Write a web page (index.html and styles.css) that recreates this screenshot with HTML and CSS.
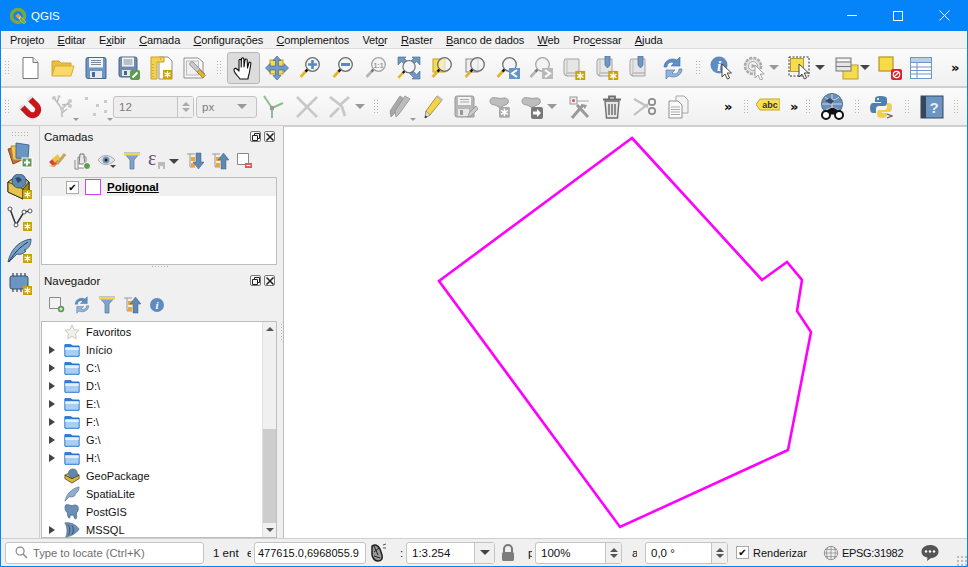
FILE: index.html
```html
<!DOCTYPE html>
<html lang="pt">
<head>
<meta charset="utf-8">
<title>QGIS</title>
<link rel="stylesheet" href="styles.css">
</head>
<body>
<svg class="sprite" width="0" height="0" aria-hidden="true">
<defs>
<g id="star"><rect width="9" height="9" fill="#c9a207"/><path d="M4.500 1.200v6.600M1.600 2.900l5.800 3.200M7.400 2.900L1.600 6.100" stroke="#fff" stroke-width="1.200"/></g>
<g id="stargrey"><rect width="9" height="9" rx="1" fill="#a9a9a9"/><path d="M4.500 1.200v6.600M1.600 2.900l5.800 3.200M7.400 2.900L1.600 6.100" stroke="#fff" stroke-width="1.200"/></g>
<g id="ptr"><path d="M0 0v13l3-3 2.400 5 2.200-1-2.400-5H9.500z" fill="#fff" stroke="#333" stroke-width=".9"/></g>
<g id="lens"><path d="M9 14l-6.500 7" stroke="#e2b52d" stroke-width="2.600"/><path d="M10 13l-2.500 2.600" stroke="#111" stroke-width="2.400"/><circle cx="14.500" cy="8.500" r="6.800" fill="#f2f4f5" stroke="#6e6e6e" stroke-width="1.300"/></g>
<g id="lensg"><path d="M9 14l-6.500 7" stroke="#b5b5b5" stroke-width="2.600"/><path d="M10 13l-2.500 2.600" stroke="#777" stroke-width="2.400"/><circle cx="14.500" cy="8.500" r="6.800" fill="#f4f4f4" stroke="#a5a5a5" stroke-width="1.300"/></g>
<g id="scroll"><path d="M3 3h14v17H5.500C3.500 20 2 19 2 17V5z" fill="#e6e6e6" stroke="#a3a3a3"/><path d="M5.500 20c-2 0-2-3 0-3H17" fill="none" stroke="#a3a3a3"/><path d="M5 4v13" stroke="#bdbdbd"/></g>
<g id="blob"><path d="M3 6c0-3 3-4 7-3s5 0 8 0 4 3 3 5-4 2-5 3-4 2-6 0-7 0-7-5z" fill="#bdbdbd" stroke="#9b9b9b"/></g>

<symbol id="new" viewBox="0 0 24 24"><path d="M5 1.500h10l5 5v16H5z" fill="#fff" stroke="#777"/><path d="M15 1.500v5h5" fill="#eee" stroke="#777"/></symbol>
<symbol id="open" viewBox="0 0 24 24"><path d="M1 20V5h7l2 2h10v4" fill="#e8bf3f" stroke="#d2a62b"/><path d="M1 20l3-10h19l-3 10z" fill="#f8d969" stroke="#d9ae30"/></symbol>
<symbol id="save" viewBox="0 0 24 24"><path d="M2 3.500a2 2 0 0 1 2-2h16a2 2 0 0 1 2 2v19H4a2 2 0 0 1-2-2z" fill="#6b95c3" stroke="#47698f"/><rect x="5" y="2" width="14" height="9.500" fill="#f4f4f4"/><path d="M7 4.500h10M7 6.500h10M7 8.500h10" stroke="#7d8a97"/><rect x="6" y="15" width="12" height="7" fill="#e6e9ec"/><rect x="8" y="16" width="3" height="5" fill="#47698f"/></symbol>
<symbol id="saveas" viewBox="0 0 24 24"><path d="M2 3a2 2 0 0 1 2-2h14a2 2 0 0 1 2 2v18H4a2 2 0 0 1-2-2z" fill="#6b8cb0" stroke="#4c6580"/><rect x="5" y="1.500" width="12" height="9" fill="#f4f4f4"/><path d="M6.500 4h9M6.500 6h9M6.500 8h9" stroke="#7d8a97"/><rect x="5" y="14" width="11" height="6" fill="#e6e9ec"/><rect x="7" y="15" width="3" height="4" fill="#4c6580"/><rect x="13" y="14" width="10" height="10" rx="2" fill="#5f9a54"/><path d="M15.500 21.500l5-5" stroke="#fff" stroke-width="2"/></symbol>
<symbol id="layout" viewBox="0 0 24 24"><path d="M9 1h9l4 4v18H9z" fill="#fff" stroke="#8d8d8d"/><path d="M1 1h13v5H7v17H1z" fill="#f3d34e" stroke="#c4a02a"/><path d="M3 8v13M10 3h3" stroke="#a98c28" stroke-dasharray="1 2"/><use href="#star" x="13" y="14"/></symbol>
<symbol id="report" viewBox="0 0 24 24"><path d="M1 2h14l5 4v16H1z" fill="#f8f8f8" stroke="#8f8f8f"/><rect x="3.500" y="5" width="12" height="14" fill="#eef1f4" stroke="#bbb"/><path d="M8 6c-2 1-2 3 0 4l9 9 2 2 3-3-2-2-9-9c-1-1.500-2-1.500-3-1z" fill="#c9c9c9" stroke="#777" stroke-width=".7"/><path d="M14 16l6 6 2.500-2.500-6-6z" fill="#e2b52d" stroke="#9c7d18" stroke-width=".7"/></symbol>
<symbol id="hand" viewBox="0 0 24 24"><path d="M8 23c-2-3-6-6-6-9 0-2 2-2 3-1l2 2V4.500c0-1.500 2.200-1.500 2.200 0V11l.3-8c0-1.500 2.400-1.500 2.400 0l.1 8 1-7c.2-1.500 2.300-1.200 2.200.3L15.500 12l1.300-5c.4-1.400 2.400-.9 2.100.5L17.500 16c-.5 3-1.500 4-1.500 7z" fill="#fff" stroke="#111" stroke-width="1.100" stroke-linejoin="round"/></symbol>
<symbol id="pan" viewBox="0 0 24 24"><rect x="5" y="4" width="13" height="14" fill="#f6dc52" stroke="#b89b2a"/><path d="M12 0l4 4.500h-2.500v5.500h5.500V7.500l4.500 4.500-4.500 4.500V14h-5.500v5.500H16L12 24l-4-4.500h2.500V14H5v2.500L.5 12 5 7.500V10h5.500V4.500H8z" fill="#6f9ac9" stroke="#47698f" stroke-width=".7"/></symbol>
<symbol id="zin" viewBox="0 0 24 24"><use href="#lens"/><path d="M14.500 4v9M10 8.500h9" stroke="#5b88b8" stroke-width="2.600"/></symbol>
<symbol id="zout" viewBox="0 0 24 24"><use href="#lens"/><path d="M10 8.500h9" stroke="#5b88b8" stroke-width="3"/></symbol>
<symbol id="z11" viewBox="0 0 24 24"><use href="#lensg"/><text x="14.500" y="11.500" class="svgt">1:1</text></symbol>
<symbol id="zfull" viewBox="0 0 24 24"><path d="M1 1h8L7.500 2.500l4 4-3 3-4-4L3 7 1 9zM23 1h-8l1.500 1.500-4 4 3 3 4-4L21 7l2 2zM23 23h-8l1.500-1.500-4-4 3-3 4 4L21 17l2-2z" fill="#6d97c4" stroke="#47698f" stroke-width=".6"/><g transform="translate(-1 3) scale(.9)"><use href="#lens"/></g></symbol>
<symbol id="zsel" viewBox="0 0 24 24"><rect x="3" y="3" width="12" height="13" fill="#f7dc4a" stroke="#bca02c"/><g><path d="M9 14l-6.500 7" stroke="#e2b52d" stroke-width="2.600"/><path d="M10 13l-2.500 2.600" stroke="#111" stroke-width="2.400"/><circle cx="14.500" cy="8.500" r="6.800" fill="#f2f4f5" fill-opacity=".65" stroke="#6e6e6e" stroke-width="1.300"/></g></symbol>
<symbol id="zlay" viewBox="0 0 24 24"><rect x="3" y="3" width="12" height="13" fill="#eee" stroke="#888"/><g><path d="M9 14l-6.500 7" stroke="#e2b52d" stroke-width="2.600"/><path d="M10 13l-2.500 2.600" stroke="#111" stroke-width="2.400"/><circle cx="14.500" cy="8.500" r="6.800" fill="#f2f4f5" fill-opacity=".65" stroke="#6e6e6e" stroke-width="1.300"/></g></symbol>
<symbol id="zlast" viewBox="0 0 24 24"><g transform="translate(-1 0)"><use href="#lens"/></g><rect x="13" y="12" width="11" height="11" fill="#6495c8"/><path d="M21 14l-5 3.500 5 3.500" fill="none" stroke="#fff" stroke-width="2"/></symbol>
<symbol id="znext" viewBox="0 0 24 24"><g transform="translate(-1 0)"><use href="#lensg"/></g><rect x="13" y="12" width="11" height="11" fill="#b9b9b9"/><path d="M16 14l5 3.500-5 3.500" fill="none" stroke="#fff" stroke-width="2"/></symbol>
<symbol id="bm1" viewBox="0 0 24 24"><use href="#scroll"/><use href="#star" x="13" y="14" transform="translate(-1 -.5) scale(1.100)"/></symbol>
<symbol id="bm2" viewBox="0 0 24 24"><use href="#scroll"/><path d="M10 0h5v9l-2.500 3L10 9z" fill="#6d97c4" stroke="#47698f" stroke-width=".7"/><use href="#star" x="13" y="14" transform="translate(-1 -.5) scale(1.100)"/></symbol>
<symbol id="bm3" viewBox="0 0 24 24"><use href="#scroll"/><path d="M10 0h5v9l-2.500 3L10 9z" fill="#6d97c4" stroke="#47698f" stroke-width=".7"/></symbol>
<symbol id="refresh" viewBox="0 0 24 24"><path d="M3 11C3 5 10 1 16 4l3-3v9h-9l3-3c-3-2-7 0-7 4z" fill="#5e8fc4" stroke="#3f6d9f" stroke-width=".6"/><path d="M21 13c0 6-7 10-13 7l-3 3v-9h9l-3 3c3 2 7 0 7-4z" fill="#8fb5dc" stroke="#3f6d9f" stroke-width=".6"/></symbol>
<symbol id="identify" viewBox="0 0 24 24"><circle cx="9" cy="9" r="8.500" fill="#5e8cc0"/><text x="9" y="14.500" class="svgi">i</text><use href="#ptr" x="12" y="8"/></symbol>
<symbol id="action" viewBox="0 0 24 24"><circle cx="10" cy="10" r="8" fill="#e3e3e3" stroke="#aaa" stroke-width="2.500" stroke-dasharray="3 1.200"/><circle cx="10" cy="10" r="4.500" fill="#f4f4f4" stroke="#aaa"/><path d="M8.500 7.500l4 2.500-4 2.500z" fill="#aaa"/><g transform="translate(12 9)"><path d="M0 0v13l3-3 2.400 5 2.200-1-2.400-5h4z" fill="#fff" stroke="#999" stroke-width=".9"/></g></symbol>
<symbol id="selrect" viewBox="0 0 24 24"><rect x="1" y="1" width="20" height="19" fill="none" stroke="#333" stroke-dasharray="2 1.500"/><rect x="2.500" y="2.500" width="13" height="13" fill="#f7dc4a" stroke="#b89b2a"/><use href="#ptr" x="11" y="8"/></symbol>
<symbol id="attrsel" viewBox="0 0 24 24"><rect x="8" y="9" width="15" height="14" fill="#f7dc4a" stroke="#b89b2a"/><rect x="1" y="2" width="15" height="13" fill="#e6e6e6" stroke="#777"/><path d="M1 6h15M1 10.500h15" stroke="#777"/><rect x="3" y="3.500" width="11" height="1.500" fill="#fff"/></symbol>
<symbol id="desel" viewBox="0 0 24 24"><rect x="1" y="1" width="14" height="14" fill="#f7dc4a" stroke="#b89b2a" stroke-width="1.300"/><rect x="13" y="13" width="11" height="11" rx="2" fill="#d8242a"/><circle cx="18.500" cy="18.500" r="3.200" fill="none" stroke="#fff" stroke-width="1.200"/><path d="M16 21l5-5" stroke="#fff" stroke-width="1.200"/></symbol>
<symbol id="table" viewBox="0 0 24 24"><rect x="1.500" y="1.500" width="21" height="21" fill="#fff" stroke="#6d97c4"/><rect x="1.500" y="1.500" width="21" height="5" fill="#b9cfe6" stroke="#6d97c4"/><path d="M1.500 11h21M1.500 14.500h21M1.500 18h21M8 6.500v16" stroke="#6d97c4"/></symbol>
<symbol id="magnet" viewBox="0 0 24 24"><path d="M4 12l7 7a5.700 5.700 0 0 0 8-8l-7-7" fill="none" stroke="#c8141a" stroke-width="6"/><path d="M2.500 10.500l2 2M10.500 2.500l2 2" stroke="#e4e4e4" stroke-width="6"/></symbol>
<symbol id="tree" viewBox="0 0 24 24"><g fill="none" stroke="#bcbcbc" stroke-width="1.500"><path d="M11 22V14M11 14L3 3M11 14l8-8M11 10l8-1M6 8l2-7M11 18l5-4"/></g><g fill="#c8c8c8"><circle cx="3" cy="3" r="2"/><circle cx="8" cy="1.500" r="1.500"/><circle cx="19" cy="6" r="2"/><circle cx="19" cy="11" r="2"/><circle cx="11" cy="14" r="2"/></g></symbol>
<symbol id="dots" viewBox="0 0 24 24"><g fill="#cbcbcb"><rect x="1" y="2" width="3" height="3"/><rect x="9" y="18" width="3" height="3"/><rect x="12" y="9" width="3" height="3"/><rect x="20" y="5" width="3" height="3"/><rect x="20" y="15" width="3" height="3"/></g></symbol>
<symbol id="ysplit" viewBox="0 0 24 24"><path d="M10 13L2 1M10 13v10" stroke="#8fbc8f" stroke-width="2"/><path d="M10 13l11-5" stroke="#8fbc8f" stroke-width="2"/><rect x="8" y="11" width="4" height="4" fill="#999"/></symbol>
<symbol id="xgrey" viewBox="0 0 24 24"><path d="M2 2l20 20M22 2L2 22" stroke="#c8c8c8" stroke-width="2.500"/></symbol>
<symbol id="xgrey2" viewBox="0 0 24 24"><path d="M3 22L12 13M12 11l10-9M3 2l9 7 3 3 3 9" fill="none" stroke="#c8c8c8" stroke-width="2.800"/></symbol>
<symbol id="pencils" viewBox="0 0 24 24"><path d="M3 22l-1-6L12 1l4 3L6 19z" fill="#a9a9a9" stroke="#8a8a8a" stroke-width=".7"/><path d="M8 22l-1-6L17 1l5 3L11 19z" fill="#bdbdbd" stroke="#8a8a8a" stroke-width=".7"/></symbol>
<symbol id="pencil" viewBox="0 0 24 24"><path d="M4 23l1-7L16 1l5 4L9 20z" fill="#f2d54b" stroke="#9c8a3a" stroke-width=".9"/><path d="M4 23l1-7 4 4z" fill="#ddd" stroke="#777" stroke-width=".6"/><path d="M4 23l.4-2.500 2 1.500z" fill="#222"/><path d="M15 2l6 4.500 1-2L17 .5z" fill="#bbb"/></symbol>
<symbol id="savegrey" viewBox="0 0 24 24"><path d="M1 3a2 2 0 0 1 2-2h15a2 2 0 0 1 2 2v19H3a2 2 0 0 1-2-2z" fill="#b8b8b8" stroke="#989898"/><rect x="4" y="2" width="13" height="8" fill="#f2f2f2"/><path d="M6 4.500h9M6 7h9" stroke="#aaa"/><rect x="4" y="14" width="11" height="7" fill="#e8e8e8"/><rect x="6" y="15" width="3" height="5" fill="#999"/><path d="M14 22l1-4 7-7 2 3-7 7z" fill="#c9c9c9" stroke="#888" stroke-width=".7"/></symbol>
<symbol id="blobstar" viewBox="0 0 24 24"><use href="#blob"/><use href="#stargrey" transform="translate(12 12) scale(1.200)"/></symbol>
<symbol id="blobarrow" viewBox="0 0 24 24"><use href="#blob"/><rect x="12" y="12" width="12" height="12" rx="2" fill="#777"/><path d="M14 16.500h4V14l4 4-4 4v-2.500h-4z" fill="#fff"/></symbol>
<symbol id="nodetool" viewBox="0 0 24 24"><path d="M7 6h15" stroke="#aaa"/><rect x="3" y="2" width="7" height="7" fill="#eee" stroke="#999"/><circle cx="6.500" cy="5.500" r="1.500" fill="#c55"/><path d="M5 23L16 10M10 10l11 12" stroke="#9a9a9a" stroke-width="3"/><path d="M14 9l6 1-2 4z" fill="#9a9a9a"/></symbol>
<symbol id="trash" viewBox="0 0 24 24"><path d="M5 6h14l-1.500 17h-11z" fill="#e6e6e6" stroke="#6f6f6f" stroke-width="1.400"/><path d="M9 9v11M12 9v11M15 9v11" stroke="#6f6f6f" stroke-width="1.500"/><path d="M3 4.500h18M9 4V1.500h6V4" fill="none" stroke="#6f6f6f" stroke-width="1.800"/></symbol>
<symbol id="cut" viewBox="0 0 24 24"><path d="M1 4l14 8M1 20L15 9" stroke="#c0c0c0" stroke-width="2.200"/><circle cx="19" cy="7" r="3.200" fill="none" stroke="#8b8b8b" stroke-width="1.700"/><circle cx="19" cy="16" r="3.200" fill="none" stroke="#8b8b8b" stroke-width="1.700"/></symbol>
<symbol id="copy" viewBox="0 0 24 24"><path d="M10 1h8l4 4v13H10z" fill="#f3f3f3" stroke="#a9a9a9"/><path d="M3 6h9l4 4v13H3z" fill="#fafafa" stroke="#8f8f8f"/><path d="M5 12h9M5 14.500h9M5 17h9M5 19.500h9" stroke="#a9a9a9"/></symbol>
<symbol id="abc" viewBox="0 0 24 24"><path d="M4 4h20v11H4L0 9.500z" fill="#f8df55" stroke="#c9a42c"/><text x="14" y="13" class="svgabc">abc</text></symbol>
<symbol id="webb" viewBox="0 0 28 28"><circle cx="13" cy="11" r="10.500" fill="#6d8fb6" stroke="#4b6b91"/><path d="M3 11h20M13 1v20M6 4c4 4 10 4 14 0M6 18c4-4 10-4 14 0" fill="none" stroke="#c8d8e9"/><path d="M6 8l5-3 4 3-3 3z" fill="#344c68"/><circle cx="7" cy="22" r="4" fill="#fff" stroke="#111" stroke-width="2"/><circle cx="20" cy="22" r="4" fill="#fff" stroke="#111" stroke-width="2"/><path d="M7 18l5-3h3l5 3-4 3h-5z" fill="#111"/></symbol>
<symbol id="python" viewBox="0 0 24 24"><path d="M12 1c-5 0-6 1-6 3v3h6v1H4c-2 0-3 2-3 5s1 5 3 5h3v-4c0-2 1-3 3-3h5c2 0 3-1 3-3V4c0-2-2-3-6-3z" fill="#4f80ae"/><circle cx="9" cy="4" r="1" fill="#fff"/><path d="M18 8v3c0 3-1 4-3 4H10c-1 0-2 1-2 2v3c0 2 2 3 5 3s5-1 5-3v-2h-5v-1h7c2 0 3-2 3-5s-1-4-3-4z" fill="#f3cf4e"/><path d="M18 19l5 2-5 2" fill="none" stroke="#555" stroke-width="1.200"/></symbol>
<symbol id="help" viewBox="0 0 24 24"><rect x="1" y="1" width="22" height="22" fill="#6b95c3" stroke="#36475a"/><rect x="1" y="1" width="5" height="22" fill="#36475a"/><text x="14" y="18" class="svgq">?</text></symbol>

<symbol id="addlayer" viewBox="0 0 26 26"><path d="M1 7l12-3 4 13-11 5z" fill="#c56a38" stroke="#8a4a28"/><path d="M4 4h14v14H6z" fill="#f3c64f" stroke="#b08d2a"/><path d="M9 1l13 2-1 14-12-1z" fill="#6b95c3" stroke="#47698f"/><rect x="15" y="16" width="10" height="9" fill="#5f9a54" stroke="#fff"/><path d="M20 17.500v6M17 20.500h6" stroke="#fff" stroke-width="2"/></symbol>
<symbol id="dbadd" viewBox="0 0 26 26"><path d="M1 8l4-3h14l3 3v11l-6 6L1 18z" fill="#e5bd3b" stroke="#222"/><path d="M1 8l15 7v10L1 18z" fill="#e9c44a" stroke="#222" stroke-width=".8"/><path d="M16 15l6-7v11l-6 6z" fill="#a3851f" stroke="#222" stroke-width=".8"/><circle cx="12" cy="7" r="7" fill="#5f87b3" stroke="#3d5d80"/><path d="M8 4l4-1 3 3-4 3z" fill="#2f4866"/><use href="#star" x="16" y="16"/></symbol>
<symbol id="vec" viewBox="0 0 26 26"><path d="M3 3l6 16 8-13 6-1" fill="none" stroke="#333" stroke-width="1.500"/><circle cx="3" cy="3" r="2" fill="#fff" stroke="#555"/><circle cx="9" cy="19" r="2" fill="#fff" stroke="#555"/><circle cx="17" cy="6" r="2" fill="#fff" stroke="#555"/><circle cx="23" cy="5" r="2" fill="#fff" stroke="#555"/><use href="#star" x="16" y="16"/></symbol>
<symbol id="feather" viewBox="0 0 26 26"><path d="M1 24C3 14 10 3 24 1c0 8-4 10-7 11l2 1c-3 3-6 4-9 3l-5 5z" fill="#7ea3c9" stroke="#3d5d80"/><path d="M2 24C7 15 13 9 21 4" fill="none" stroke="#1f3550"/><use href="#star" x="16" y="16"/></symbol>
<symbol id="chip" viewBox="0 0 26 26"><rect x="3" y="6" width="18" height="13" rx="2" fill="#6b95c3" stroke="#36506e"/><path d="M6 3v3M10 3v3M14 3v3M18 3v3M6 19v3M10 19v3M14 19v3" stroke="#36506e" stroke-width="1.300"/><use href="#star" x="16" y="16"/></symbol>

<symbol id="style" viewBox="0 0 18 18"><path d="M1 10l7-6 3 6-5 5z" fill="#d8403a"/><path d="M4 7l6-5 2 4-5 5z" fill="#f0c53e"/><path d="M9 12l8-10" stroke="#c9a562" stroke-width="3"/><path d="M1 14l5 1 2-3" fill="#e9a33d"/></symbol>
<symbol id="addgroup" viewBox="0 0 18 18"><path d="M5 5h8v11H5z" fill="#fff" stroke="#888"/><path d="M7 2h4v3l1 7H6z" fill="#e8e8e8" stroke="#777"/><path d="M2 8v9h4" fill="none" stroke="#888"/><circle cx="14" cy="14" r="3.500" fill="#5f9a54" stroke="#fff"/></symbol>
<symbol id="eye" viewBox="0 0 18 18"><path d="M0 8c4-6 12-6 17 0-5 6-13 6-17 0z" fill="#e3e3e3" stroke="#a9a9a9"/><circle cx="8" cy="8" r="3.500" fill="#6d97c4"/><circle cx="8" cy="8" r="1.500" fill="#222"/><path d="M12 13h6l-3 3z" fill="#444"/></symbol>
<symbol id="filter" viewBox="0 0 18 18"><path d="M1 1h16l-6 7v9H7V8z" fill="#7fa4c9" stroke="#54769a" stroke-width=".7"/><rect x="1" y="1" width="16" height="2.500" fill="#f4d547"/></symbol>
<symbol id="eps" viewBox="0 0 18 18"><text x="0" y="13" class="svge">ε</text><path d="M10 10h7v7h-2v-3h-3v3h-2z" fill="#bbb"/></symbol>
<symbol id="expand" viewBox="0 0 18 18"><path d="M1 2h8M4 2v13h5" fill="none" stroke="#999"/><rect x="5" y="5" width="4" height="4" fill="#f0a53a"/><rect x="5" y="11" width="4" height="4" fill="#f0a53a"/><path d="M10 1h5v9h3l-5.500 7L7 10h3z" fill="#5f88b5" stroke="#3d5d80" stroke-width=".5"/></symbol>
<symbol id="collapse" viewBox="0 0 18 18"><path d="M1 2h8M4 2v13h5" fill="none" stroke="#999"/><rect x="5" y="5" width="4" height="4" fill="#f0a53a"/><rect x="5" y="11" width="4" height="4" fill="#f0a53a"/><path d="M10 17h5V8h3L12.500 1 7 8h3z" fill="#5f88b5" stroke="#3d5d80" stroke-width=".5"/></symbol>
<symbol id="rmlayer" viewBox="0 0 18 18"><path d="M1.500 1.500h11v11h-11z" fill="#fff" stroke="#8a8a8a"/><rect x="9" y="11" width="7" height="5" fill="#e05555"/><path d="M10.500 13.500h4" stroke="#fff" stroke-width="1.300"/></symbol>
<symbol id="addres" viewBox="0 0 18 18"><path d="M1.500 1.500h11v11h-11z" fill="#f3f3f3" stroke="#8a8a8a"/><circle cx="13" cy="13" r="3.200" fill="#5f9a54"/><path d="M13 11.500v3M11.500 13h3" stroke="#fff"/></symbol>
<symbol id="infosm" viewBox="0 0 18 18"><circle cx="9" cy="9" r="7" fill="#5e8cc0"/><text x="9" y="13" class="svgis">i</text></symbol>
<symbol id="star5" viewBox="0 0 18 18"><path d="M9 1l2.400 5.300 5.600.7-4 4 1 5.600L9 14l-5 2.600 1-5.600-4-4 5.600-.7z" fill="#f0f0ea" stroke="#c5c5bd"/></symbol>
<symbol id="folder" viewBox="0 0 18 18"><path d="M1 3h7l1.500 1.500H17V16H1z" fill="#2f7fd8" stroke="#1767c7"/><rect x="1.500" y="6" width="15" height="9.500" fill="#a9cff3"/><rect x="1.500" y="6" width="15" height="3" fill="#e3f0fb"/></symbol>
<symbol id="gpkg" viewBox="0 0 18 18"><path d="M1 8l8-4 8 4-8 4z" fill="#e9c44a" stroke="#222" stroke-width=".7"/><path d="M1 8v4l8 5 8-5V8l-8 4z" fill="#dcb432" stroke="#222" stroke-width=".7"/><circle cx="10" cy="6" r="5" fill="#5f87b3" stroke="#3d5d80" stroke-width=".7"/></symbol>
<symbol id="spl" viewBox="0 0 18 18"><path d="M1 17C3 9 8 3 17 1c0 5-3 7-5 8l1 1c-2 2-4 3-7 2l-3 3z" fill="#8eaed0" stroke="#4b6b91" stroke-width=".7"/></symbol>
<symbol id="pg" viewBox="0 0 18 18"><path d="M2 1c-2 3 0 8 2 9 0 2 0 5 2 6 1-1 1-3 1-4 1 1 3 1 4 0 0 1 0 4 2 5 2-1 1-5 1-7 2-2 3-6 1-8-3-2-5 0-6 0S5 0 2 1z" fill="#6d8fb6" stroke="#3d5d80" stroke-width=".8"/></symbol>
<symbol id="mssql" viewBox="0 0 18 18"><path d="M1 1c5-1 12 1 16 7-3 5-9 8-15 9 2-5 2-11-1-16z" fill="#6d8fb6" stroke="#3d5d80" stroke-width=".7"/><path d="M5 3c2 4 2 8 0 12M9 4c2 3 2 7 0 10" fill="none" stroke="#2f4866"/></symbol>
<symbol id="mouse" viewBox="0 0 20 20"><path d="M4 3c3-2 6-1 8 3l2 6c1 4-1 6-4 6s-5-2-6-6z" fill="#999" stroke="#222" stroke-width="1.500"/><path d="M6 3l4 9M11 5l-5 4M6 13l6 2" stroke="#222"/><path d="M15 2l3-1M15 5l3 0M14 0l1-1" stroke="#555"/></symbol>
<symbol id="lock" viewBox="0 0 16 18"><path d="M4 8V5a4 4 0 0 1 8 0v3" fill="none" stroke="#777" stroke-width="2"/><rect x="2" y="8" width="12" height="9" rx="1.500" fill="#7d7d7d"/></symbol>
<symbol id="globe" viewBox="0 0 18 18"><circle cx="9" cy="9" r="7.500" fill="#eee" stroke="#888"/><path d="M1.500 9h15M9 1.500v15M3 5h12M3 13h12M5.500 2.500c-2 4-2 9 0 13M12.500 2.500c2 4 2 9 0 13" fill="none" stroke="#888" stroke-width=".8"/></symbol>
<symbol id="chat" viewBox="0 0 18 18"><path d="M9 1c5 0 8.500 2.500 8.500 6.500S14 14 10 14l-4 3 .5-3.500C3 13 .5 11 .5 7.500S4 1 9 1z" fill="#555"/><circle cx="5" cy="7.500" r="1.200" fill="#fff"/><circle cx="9" cy="7.500" r="1.200" fill="#fff"/><circle cx="13" cy="7.500" r="1.200" fill="#fff"/></symbol>
<symbol id="search" viewBox="0 0 14 14"><circle cx="5.500" cy="5.500" r="4.300" fill="none" stroke="#888" stroke-width="1.300"/><path d="M8.700 8.700l4.300 4.300" stroke="#888" stroke-width="1.500"/></symbol>
<symbol id="qlogo" viewBox="0 0 18 18"><circle cx="9" cy="9" r="6.500" fill="none" stroke="#7ea63a" stroke-width="3.500"/><path d="M9 9l7 7" stroke="#f1f1f1" stroke-width="3"/><path d="M11 11l5 5" stroke="#7ea63a" stroke-width="2.500"/><rect x="7" y="7" width="4" height="4" transform="rotate(45 9 9)" fill="#eb9b2c"/></symbol>
<symbol id="float" viewBox="0 0 8 8"><path d="M2.500.500h5v5h-5z" fill="none" stroke="#222"/><path d="M.5 2.500h5v5h-5z" fill="#f5f5f5" stroke="#222"/></symbol>
<symbol id="closex" viewBox="0 0 8 8"><path d="M.5.500l7 7M7.500.500l-7 7" stroke="#222" stroke-width="1.500"/></symbol>
</defs>
</svg>

<div class="window">
  <header class="titlebar">
    <svg class="qlogo"><use href="#qlogo"/></svg>
    <span class="apptitle">QGIS</span>
    <div class="wincontrols">
      <span class="wbtn"><span class="wmin"></span></span>
      <span class="wbtn"><span class="wmax"></span></span>
      <span class="wbtn"><svg class="wclose" viewBox="0 0 11 11"><path d="M.5.500l10 10M10.500.500l-10 10" stroke="#fff" stroke-width="1"/></svg></span>
    </div>
  </header>

  <nav class="menubar">
    <span>Pro<u>j</u>eto</span><span><u>E</u>ditar</span><span>E<u>x</u>ibir</span><span><u>C</u>amada</span><span><u>C</u>onfigurações</span><span><u>C</u>omplementos</span><span>Vet<u>o</u>r</span><span><u>R</u>aster</span><span><u>B</u>anco de dados</span><span><u>W</u>eb</span><span>Pro<u>c</u>essar</span><span><u>A</u>juda</span>
  </nav>

  <div class="toolbar tb1">
    <span class="grip"></span>
    <span class="t"><svg class="i"><use href="#new"/></svg></span>
    <span class="t"><svg class="i"><use href="#open"/></svg></span>
    <span class="t"><svg class="i"><use href="#save"/></svg></span>
    <span class="t"><svg class="i"><use href="#saveas"/></svg></span>
    <span class="t"><svg class="i"><use href="#layout"/></svg></span>
    <span class="t"><svg class="i"><use href="#report"/></svg></span>
    <span class="grip g16"></span>
    <span class="t on"><svg class="i"><use href="#hand"/></svg></span>
    <span class="t"><svg class="i"><use href="#pan"/></svg></span>
    <span class="t"><svg class="i"><use href="#zin"/></svg></span>
    <span class="t"><svg class="i"><use href="#zout"/></svg></span>
    <span class="t"><svg class="i"><use href="#z11"/></svg></span>
    <span class="t"><svg class="i"><use href="#zfull"/></svg></span>
    <span class="t"><svg class="i"><use href="#zsel"/></svg></span>
    <span class="t"><svg class="i"><use href="#zlay"/></svg></span>
    <span class="t"><svg class="i"><use href="#zlast"/></svg></span>
    <span class="t"><svg class="i"><use href="#znext"/></svg></span>
    <span class="t"><svg class="i"><use href="#bm1"/></svg></span>
    <span class="t"><svg class="i"><use href="#bm2"/></svg></span>
    <span class="t"><svg class="i"><use href="#bm3"/></svg></span>
    <span class="t"><svg class="i"><use href="#refresh"/></svg></span>
    <span class="grip g15"></span>
    <span class="t t35"><svg class="i"><use href="#identify"/></svg></span>
    <span class="t wa"><svg class="i"><use href="#action"/></svg><span class="arr grey a2"></span></span>
    <span class="t wa2"><svg class="i"><use href="#selrect"/></svg><span class="arr a3"></span></span>
    <span class="t wa3"><svg class="i"><use href="#attrsel"/></svg><span class="arr a1"></span></span>
    <span class="t"><svg class="i"><use href="#desel"/></svg></span>
    <span class="t t30"><svg class="i"><use href="#table"/></svg></span>
    <span class="more m17">»</span>
  </div>

  <div class="toolbar tb2">
    <span class="grip"></span>
    <span class="t"><svg class="i"><use href="#magnet"/></svg></span>
    <span class="t"><svg class="i"><use href="#tree"/></svg><span class="arr small grey"></span></span>
    <span class="t t34"><svg class="i"><use href="#dots"/></svg><span class="arr small grey"></span></span>
    <span class="spin disabled w81"><span class="val">12</span><span class="spbtn"><i class="up"></i><i class="dn"></i></span></span>
    <span class="combo disabled w61"><span class="val">px</span><span class="arr grey"></span></span>
    <span class="t"><svg class="i"><use href="#ysplit"/></svg></span>
    <span class="t"><svg class="i"><use href="#xgrey"/></svg></span>
    <span class="t t44"><svg class="i"><use href="#xgrey2"/></svg><span class="arr grey"></span></span>
    <span class="grip g8"></span>
    <span class="t"><svg class="i"><use href="#pencils"/></svg><span class="arr small grey"></span></span>
    <span class="t"><svg class="i"><use href="#pencil"/></svg></span>
    <span class="t"><svg class="i"><use href="#savegrey"/></svg></span>
    <span class="t"><svg class="i"><use href="#blobstar"/></svg></span>
    <span class="t t47"><svg class="i"><use href="#blobarrow"/></svg><span class="arr grey"></span></span>
    <span class="t"><svg class="i"><use href="#nodetool"/></svg></span>
    <span class="t"><svg class="i"><use href="#trash"/></svg></span>
    <span class="t"><svg class="i"><use href="#cut"/></svg></span>
    <span class="t"><svg class="i"><use href="#copy"/></svg></span>
    <span class="more m37">»</span>
    <span class="grip g8"></span>
    <span class="t t30"><svg class="i"><use href="#abc"/></svg></span>
    <span class="more m12">»</span>
    <span class="grip g17"></span>
    <span class="t t34"><svg class="i big"><use href="#webb"/></svg></span>
    <span class="grip g8"></span>
    <span class="t t34"><svg class="i"><use href="#python"/></svg></span>
    <span class="grip g17"></span>
    <span class="t t34"><svg class="i"><use href="#help"/></svg></span>
    <span class="grip g8"></span>
  </div>

  <main class="main">
    <aside class="sidetools">
      <span class="hgrip"></span>
      <svg class="si"><use href="#addlayer"/></svg>
      <svg class="si"><use href="#dbadd"/></svg>
      <svg class="si"><use href="#vec"/></svg>
      <svg class="si"><use href="#feather"/></svg>
      <svg class="si"><use href="#chip"/></svg>
    </aside>

    <section class="panels">
      <div class="panel p1">
        <div class="ptitle"><span>Camadas</span><span class="pbtns"><span class="pb"><svg class="px"><use href="#float"/></svg></span><span class="pb"><svg class="px"><use href="#closex"/></svg></span></span></div>
        <div class="ptools">
          <svg class="pi"><use href="#style"/></svg>
          <svg class="pi"><use href="#addgroup"/></svg>
          <svg class="pi"><use href="#eye"/></svg>
          <svg class="pi"><use href="#filter"/></svg>
          <svg class="pi"><use href="#eps"/></svg><span class="arr nomar"></span>
          <svg class="pi"><use href="#expand"/></svg>
          <svg class="pi"><use href="#collapse"/></svg>
          <svg class="pi"><use href="#rmlayer"/></svg>
        </div>
        <div class="tree layers">
          <div class="layer"><span class="check">✔</span><span class="swatch"></span><b>Poligonal</b></div>
        </div>
      </div>
      <div class="splitter"></div>
      <div class="panel p2">
        <div class="ptitle"><span>Navegador</span><span class="pbtns"><span class="pb"><svg class="px"><use href="#float"/></svg></span><span class="pb"><svg class="px"><use href="#closex"/></svg></span></span></div>
        <div class="ptools">
          <svg class="pi"><use href="#addres"/></svg>
          <svg class="pi"><use href="#refresh"/></svg>
          <svg class="pi"><use href="#filter"/></svg>
          <svg class="pi"><use href="#collapse"/></svg>
          <svg class="pi"><use href="#infosm"/></svg>
        </div>
        <div class="tree browser">
          <div class="rows">
            <div class="row"><i class="exp none"></i><svg class="ri"><use href="#star5"/></svg>Favoritos</div>
            <div class="row"><i class="exp"></i><svg class="ri"><use href="#folder"/></svg>Início</div>
            <div class="row"><i class="exp"></i><svg class="ri"><use href="#folder"/></svg>C:\</div>
            <div class="row"><i class="exp"></i><svg class="ri"><use href="#folder"/></svg>D:\</div>
            <div class="row"><i class="exp"></i><svg class="ri"><use href="#folder"/></svg>E:\</div>
            <div class="row"><i class="exp"></i><svg class="ri"><use href="#folder"/></svg>F:\</div>
            <div class="row"><i class="exp"></i><svg class="ri"><use href="#folder"/></svg>G:\</div>
            <div class="row"><i class="exp"></i><svg class="ri"><use href="#folder"/></svg>H:\</div>
            <div class="row"><i class="exp none"></i><svg class="ri"><use href="#gpkg"/></svg>GeoPackage</div>
            <div class="row"><i class="exp none"></i><svg class="ri"><use href="#spl"/></svg>SpatiaLite</div>
            <div class="row"><i class="exp none"></i><svg class="ri"><use href="#pg"/></svg>PostGIS</div>
            <div class="row"><i class="exp"></i><svg class="ri"><use href="#mssql"/></svg>MSSQL</div>
          </div>
          <div class="scrollbar">
            <span class="sbtn"><i class="up"></i></span>
            <span class="strack"><span class="sthumb"></span></span>
            <span class="sbtn"><i class="dn"></i></span>
          </div>
        </div>
      </div>
    </section>

    <div class="vsplit"></div>

    <div class="canvas">
      <svg class="map" viewBox="284 127 683 411" preserveAspectRatio="none">
        <polygon points="632,138 762,280 787,262 802,280 797,311 811,332 788,450 620,527 439,281" fill="none" stroke="#ff00ff" stroke-width="2.600"/>
      </svg>
    </div>
  </main>

  <footer class="status">
    <span class="locator"><svg class="sr"><use href="#search"/></svg><span class="ph">Type to locate (Ctrl+K)</span></span>
    <span class="lbl l1">1 ent</span>
    <span class="lbl clip c1">e</span>
    <span class="field coord">477615.0,6968055.9</span>
    <svg class="st mouse"><use href="#mouse"/></svg>
    <span class="lbl clip c2">:</span>
    <span class="combo w89"><span class="val">1:3.254</span><span class="dropbtn"><span class="arr"></span></span></span>
    <svg class="st lock"><use href="#lock"/></svg>
    <span class="lbl clip c3">p</span>
    <span class="spin w87"><span class="val">100%</span><span class="spbtn"><i class="up"></i><i class="dn"></i></span></span>
    <span class="lbl clip c4">a</span>
    <span class="spin w83"><span class="val">0,0 °</span><span class="spbtn"><i class="up"></i><i class="dn"></i></span></span>
    <span class="check small">✔</span>
    <span class="lbl rend">Renderizar</span>
    <svg class="st globe"><use href="#globe"/></svg>
    <span class="lbl epsg">EPSG:31982</span>
    <svg class="st chat"><use href="#chat"/></svg>
    <span class="sizegrip"></span>
  </footer>
</div>
</body>
</html>
```
FILE: styles.css
```css
* { box-sizing: border-box; }
html, body { margin: 0; padding: 0; }
body { width: 968px; height: 567px; overflow: hidden; font-family: "Liberation Sans", Arial, sans-serif; font-size: 11.5px; color: #111; }
.sprite { position: absolute; }
.svgt { font: bold 7px "Liberation Sans", sans-serif; fill: #999; text-anchor: middle; }
.svgi { font: italic bold 15px "Liberation Serif", serif; fill: #fff; text-anchor: middle; }
.svgis { font: italic bold 11px "Liberation Serif", serif; fill: #fff; text-anchor: middle; }
.svgabc { font: bold 9px "Liberation Sans", sans-serif; fill: #333; text-anchor: middle; }
.svgq { font: bold 15px "Liberation Sans", sans-serif; fill: #e6edf5; text-anchor: middle; }
.svge { font: 20px "Liberation Serif", serif; fill: #6b4a7a; }

.window { width: 968px; height: 567px; display: flex; flex-direction: column; border: 1px solid #0583f8; border-top: 0; background: #f0f0f0; }

.titlebar { height: 31px; flex: none; background: #0583f8; display: flex; align-items: center; padding-left: 8px; color: #fff; }
.qlogo { width: 18px; height: 18px; }
.apptitle { margin-left: 4px; font-size: 11.5px; }
.wincontrols { margin-left: auto; display: flex; }
.wbtn { width: 46px; height: 31px; display: flex; align-items: center; justify-content: center; }
.wmin { width: 10px; height: 1px; background: #fff; }
.wmax { width: 10px; height: 10px; border: 1px solid #fff; }
.wclose { width: 11px; height: 11px; }

.menubar { height: 18px; flex: none; display: flex; align-items: center; padding-left: 2.4px; background: #f1f1f1; border-bottom: 1px solid #dcdcdc; font-size: 11px; letter-spacing: -.1px; }
.menubar span { padding: 0 6.65px; white-space: nowrap; }

.toolbar { flex: none; display: flex; align-items: center; background: linear-gradient(#fbfbfb, #f0f0f0); border-bottom: 2px solid #cfcfcf; }
.tb1 { height: 39px; }
.tb2 { height: 38px; border-bottom: 1px solid #cfcfcf; }

.grip { height: 16px; flex: none; width: 14px; padding: 0 4px; background-image: radial-gradient(circle, #b5b5b5 .6px, transparent .9px); background-size: 3px 3px; background-origin: content-box; background-clip: content-box; }
.toolbar > .grip:first-child { width: 12px; padding: 0 3px; }
.grip.g16 { width: 16px; padding: 0 5px; }
.grip.g15 { width: 15px; padding: 0 3px 0 6px; }
.grip.g17 { width: 17px; padding: 0 5px 0 6px; }

.t { position: relative; width: 33px; height: 32px; flex: none; display: flex; align-items: center; justify-content: center; }
.t.on { background: #dcdcdc; border: 1px solid #b8b8b8; border-radius: 3px; }
.t.wa { width: 45px; justify-content: flex-start; padding-left: 4px; }
.t.wa2 { width: 47px; justify-content: flex-start; padding-left: 4px; }
.t.wa3 { width: 42px; justify-content: flex-start; padding-left: 4px; }
.t.t30 { width: 30px; }
.t.t34 { width: 34px; }
.t.t35 { width: 35px; }
.t.t44 { width: 46px; justify-content: flex-start; padding-left: 4px; }
.t.t47 { width: 47px; justify-content: flex-start; padding-left: 4px; }
.i { width: 24px; height: 24px; flex: none; }
.i.big { width: 28px; height: 28px; }

.arr { display: inline-block; width: 0; height: 0; flex: none; margin-left: 4px; border-left: 5px solid transparent; border-right: 5px solid transparent; border-top: 5px solid #444; }
.arr.grey { border-top-color: #999; }
.arr.a1 { margin-left: 1px; }
.arr.a2 { margin-left: 2px; }
.arr.a3 { margin-left: 3px; }
.arr.small { position: absolute; right: 0; bottom: 2px; margin: 0; border-left-width: 3px; border-right-width: 3px; border-top-width: 3px; }
.arr.nomar { margin: 0 0 0 -4px; }
.more { font-family: "DejaVu Sans", sans-serif; font-weight: bold; font-size: 13px; line-height: 1; width: 14px; flex: none; color: #000; }
.m17 { margin-left: 15px; }
.m37 { width: 15px; margin-left: 30px; }
.m12 { width: 9px; margin-left: 7px; }

.spin, .combo { display: flex; align-items: center; height: 22px; flex: none; background: #fff; border: 1px solid #c4c4c4; border-radius: 3px; }
.disabled { background: #eee; color: #7a7a7a; }
.val { padding-left: 5px; flex: 1; }
.spbtn { width: 16px; height: 100%; flex: none; display: flex; flex-direction: column; align-items: center; justify-content: center; gap: 2px; border-left: 1px solid #c4c4c4; background: #f0f0f0; }
.up, .dn { display: block; width: 0; height: 0; border-left: 4px solid transparent; border-right: 4px solid transparent; }
.up { border-bottom: 4px solid #555; }
.dn { border-top: 4px solid #555; }
.disabled .up { border-bottom-color: #aaa; }
.disabled .dn { border-top-color: #aaa; }
.combo .arr { margin: 0 9px 0 0; }
.w81 { width: 81px; }
.w61 { width: 61px; margin-left: 2px; }
.w89 { width: 89px; }
.w87 { width: 87px; }
.w83 { width: 83px; }
.combo .dropbtn { width: 20px; height: 100%; display: flex; align-items: center; justify-content: center; border-left: 1px solid #c4c4c4; background: #f0f0f0; }
.combo .dropbtn .arr { margin: 0; }

.main { flex: 1; min-height: 0; display: flex; }
.sidetools { width: 39px; flex: none; display: flex; flex-direction: column; align-items: center; gap: 6px; border-right: 1px solid #cfcfcf; padding-top: 5px; }
.hgrip { width: 18px; height: 5px; flex: none; background: radial-gradient(circle, #b5b5b5 .6px, transparent .9px) 0 0 / 3px 3px; }
.si { width: 26px; height: 26px; flex: none; }

.panels { width: 240px; flex: none; display: flex; flex-direction: column; }
.panel { display: flex; flex-direction: column; }
.p1 { height: 139px; }
.p2 { flex: 1; min-height: 0; }
.ptitle { height: 21px; flex: none; display: flex; align-items: center; padding: 0 2px 0 4px; }
.pbtns { margin-left: auto; display: flex; gap: 3px; margin-right: 3px; }
.pb { width: 11px; height: 11px; border: 1px solid #777; border-radius: 2px; display: flex; align-items: center; justify-content: center; background: #f5f5f5; }
.px { width: 8px; height: 8px; flex: none; }
.ptools { height: 28px; margin-bottom: 2px; flex: none; display: flex; align-items: center; gap: 7px; padding-left: 8px; }
.pi { width: 18px; height: 18px; flex: none; }
.tree { background: #fff; border: 1px solid #bdbdbd; margin: 0 3px 0 1px; }
.layers { height: 88px; }
.layer { height: 18px; background: #f0f0f0; display: flex; align-items: center; padding-left: 24px; }
.layer b { text-decoration: underline; margin-left: 6px; color: #000; }
.check { width: 13px; height: 13px; flex: none; background: #fff; border: 1px solid #aaa; font: bold 10px/11px "DejaVu Sans", sans-serif; text-align: center; color: #000; }
.swatch { width: 16px; height: 16px; margin-left: 6px; flex: none; background: #fff; border: 1px solid #cc44ee; }
.splitter { height: 5px; flex: none; display: flex; justify-content: center; }
.splitter::before { content: ""; width: 18px; height: 3px; background: radial-gradient(circle, #b5b5b5 .6px, transparent .9px) 0 0 / 3px 3px; }
.browser { flex: 1; min-height: 0; display: flex; }
.rows { flex: 1; padding-top: 1px; font-size: 11px; }
.row { height: 18px; display: flex; align-items: center; white-space: nowrap; }
.exp { width: 0; height: 0; margin: 0 9px 0 7px; flex: none; border-top: 4px solid transparent; border-bottom: 4px solid transparent; border-left: 6px solid #444; }
.exp.none { border-left-color: transparent; }
.ri { width: 16px; height: 16px; margin-right: 6px; flex: none; }
.scrollbar { width: 14px; flex: none; display: flex; flex-direction: column; background: #f0f0f0; border-left: 1px solid #e0e0e0; }
.sbtn { height: 14px; flex: none; display: flex; align-items: center; justify-content: center; }
.strack { flex: 1; display: flex; flex-direction: column; justify-content: flex-end; }
.sthumb { height: 94px; background: #cdcdcd; }

.vsplit { width: 3px; flex: none; display: flex; align-items: center; }
.vsplit::before { content: ""; width: 3px; height: 18px; background: radial-gradient(circle, #b5b5b5 .6px, transparent .9px) 0 0 / 3px 3px; }
.canvas { flex: 1; min-width: 0; background: #fff; border-left: 1px solid #bdbdbd; border-top: 1px solid #cfcfcf; }
.map { display: block; width: 100%; height: 100%; }

.status { height: 28px; flex: none; display: flex; align-items: center; padding-left: 4px; border-top: 1px solid #cfcfcf; position: relative; }
.locator { width: 199px; height: 22px; flex: none; display: flex; align-items: center; background: #fff; border: 1px solid #c4c4c4; border-radius: 3px; }
.sr { width: 13px; height: 13px; margin: 0 5px 0 9px; flex: none; }
.ph { color: #6e6e6e; font-size: 11.2px; }
.lbl { flex: none; white-space: nowrap; }
.l1 { margin-left: 9px; width: 26px; }
.clip { width: 4px; overflow: hidden; }
.c1 { margin-left: 8px; margin-right: 3px; }
.field { height: 22px; width: 112px; flex: none; display: flex; align-items: center; padding-left: 3px; background: #fff; border: 1px solid #c4c4c4; border-radius: 3px; font-size: 11px; white-space: nowrap; overflow: hidden; }
.st { flex: none; }
.mouse { width: 20px; height: 20px; margin-left: 2px; }
.c2 { margin-left: 12px; margin-right: 2px; }
.lock { width: 16px; height: 18px; margin-left: 5px; }
.c3 { margin-left: 12px; margin-right: 3px; }
.c4 { width: 5px; margin-left: 10px; margin-right: 8px; }
.check.small { margin-left: 8px; }
.rend { margin-left: 4px; width: 52px; font-size: 11px; }
.globe { width: 16px; height: 16px; margin-left: 18px; }
.epsg { margin-left: 3px; width: 60px; font-size: 11px; letter-spacing: -.3px; }
.chat { width: 18px; height: 18px; margin-left: 19px; }
.sizegrip { position: absolute; right: 0; bottom: 0; width: 11px; height: 11px; background: radial-gradient(circle, #bbb .7px, transparent 1px) 0 0 / 4px 4px; }
```
